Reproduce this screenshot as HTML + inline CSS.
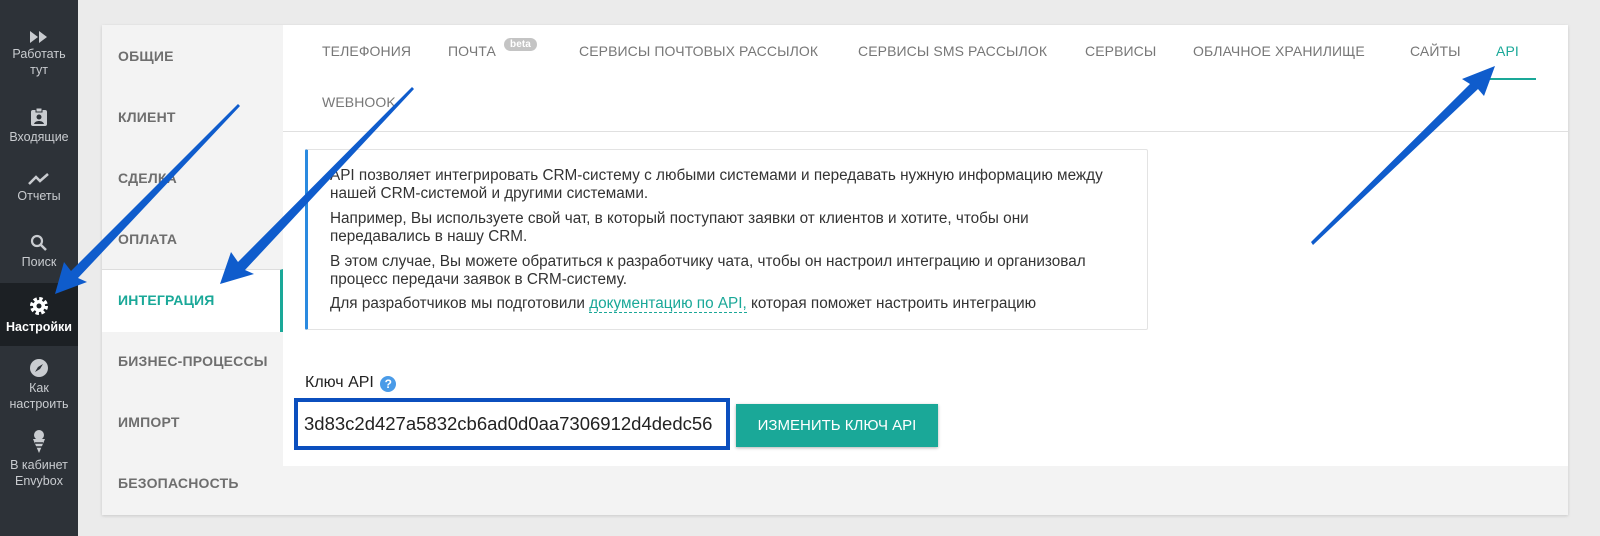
<!DOCTYPE html>
<html><head><meta charset="utf-8"><style>
*{margin:0;padding:0;box-sizing:border-box}
body{width:1600px;height:536px;overflow:hidden;background:#ebebeb;font-family:"Liberation Sans",sans-serif;position:relative}
.sb{position:absolute;left:0;top:0;width:78px;height:536px;background:#2d3238}
.si{position:absolute;left:0;width:78px;text-align:center;color:#c9ccd0;font-size:12.5px;line-height:16px}
.si svg{display:block;margin:0 auto 2px}
.act{background:#1c2024;color:#fff;font-weight:bold}
.card{position:absolute;left:102px;top:25px;width:1466px;height:490px;background:#f3f3f3;box-shadow:0 1px 3px rgba(0,0,0,.15)}
.lm{position:absolute;left:118px;font-size:14px;color:#6e6e6e;font-weight:bold;letter-spacing:.2px}
.content{position:absolute;left:283px;top:25px;width:1285px;height:441px;background:#fff}
.tab{position:absolute;font-size:14px;color:#777;top:43px;letter-spacing:.1px}
.info{position:absolute;left:305px;top:149px;width:843px;height:181px;border:1px solid #e3e3e3;border-left:3px solid #2a8ae0;border-radius:2px}
.info p{position:absolute;left:22px;font-size:15.3px;color:#333;line-height:17.5px;white-space:nowrap}
</style></head><body>
<div class="sb">
 <div class="si" style="top:30px"><svg width="20" height="14" viewBox="0 0 20 14"><path d="M1 1l8 6-8 6zM10 1l8 6-8 6z" fill="#c9ccd0"/></svg>Работать<br>тут</div>
 <div class="si" style="top:107px"><svg width="18" height="20" viewBox="0 0 18 20"><rect x="1" y="3" width="16" height="16" rx="2" fill="#c9ccd0"/><rect x="6" y="1" width="6" height="4" fill="#c9ccd0" stroke="#2d3238"/><circle cx="9" cy="10" r="2.5" fill="#2d3238"/><path d="M4 17c1-4 9-4 10 0z" fill="#2d3238"/></svg>Входящие</div>
 <div class="si" style="top:172px"><svg width="22" height="14" viewBox="0 0 22 14"><path d="M1 12l7-7 4 4 8-7" stroke="#c9ccd0" stroke-width="2.5" fill="none"/></svg>Отчеты</div>
 <div class="si" style="top:234px"><svg width="18" height="18" viewBox="0 0 18 18"><circle cx="7" cy="7" r="5" stroke="#c9ccd0" stroke-width="2.2" fill="none"/><path d="M11 11l5 5" stroke="#c9ccd0" stroke-width="2.5"/></svg>Поиск</div>
 <div class="si act" style="top:283px;height:63px;padding-top:12px"><svg width="22" height="22" viewBox="0 0 22 22"><circle cx="11" cy="11" r="7" fill="none" stroke="#fff" stroke-width="4" stroke-dasharray="3.2 2.3"/><circle cx="11" cy="11" r="6" fill="#fff"/><circle cx="11" cy="11" r="2.5" fill="#1c2024"/></svg>Настройки</div>
 <div class="si" style="top:358px"><svg width="20" height="20" viewBox="0 0 20 20"><circle cx="10" cy="10" r="9" fill="#c9ccd0"/><path d="M14 6l-5 3-3 5 5-3z" fill="#2d3238"/></svg>Как<br>настроить</div>
 <div class="si" style="top:429px"><svg width="16" height="26" viewBox="0 0 16 26"><circle cx="8" cy="6" r="5" fill="#c9ccd0"/><path d="M2 10h12l-6 14z" fill="#c9ccd0"/><path d="M4 14h8M5 18h6" stroke="#2d3238" stroke-width="1.5"/></svg>В кабинет<br>Envybox</div>
</div>
<div class="card"></div>
<div class="lm" style="top:48px">ОБЩИЕ</div>
<div class="lm" style="top:109px">КЛИЕНТ</div>
<div class="lm" style="top:170px">СДЕЛКА</div>
<div class="lm" style="top:231px">ОПЛАТА</div>
<div style="position:absolute;left:102px;top:269px;width:181px;height:63px;background:#fff;border-top:1px solid #ddd;border-right:3px solid #1aa898"></div>
<div class="lm" style="top:292px;color:#1aa898">ИНТЕГРАЦИЯ</div>
<div class="lm" style="top:353px">БИЗНЕС-ПРОЦЕССЫ</div>
<div class="lm" style="top:414px">ИМПОРТ</div>
<div class="lm" style="top:475px">БЕЗОПАСНОСТЬ</div>
<div class="content"></div>
<div class="tab" style="left:322px">ТЕЛЕФОНИЯ</div>
<div class="tab" style="left:448px">ПОЧТА <span style="position:absolute;left:56px;top:-5px;background:#c4c4c4;color:#fff;font-size:10px;font-weight:bold;border-radius:8px;padding:1px 6px">beta</span></div>
<div class="tab" style="left:579px">СЕРВИСЫ ПОЧТОВЫХ РАССЫЛОК</div>
<div class="tab" style="left:858px">СЕРВИСЫ SMS РАССЫЛОК</div>
<div class="tab" style="left:1085px">СЕРВИСЫ</div>
<div class="tab" style="left:1193px">ОБЛАЧНОЕ ХРАНИЛИЩЕ</div>
<div class="tab" style="left:1410px">САЙТЫ</div>
<div class="tab" style="left:1496px;color:#1aa898">API</div>
<div style="position:absolute;left:1482px;top:78px;width:54px;height:2px;background:#1aa898"></div>
<div class="tab" style="left:322px;top:94px">WEBHOOK</div>
<div style="position:absolute;left:283px;top:131px;width:1285px;height:1px;background:#e0e0e0"></div>
<div class="info">
<p style="top:17px">API позволяет интегрировать CRM-систему с любыми системами и передавать нужную информацию между<br>нашей CRM-системой и другими системами.</p>
<p style="top:60px">Например, Вы используете свой чат, в который поступают заявки от клиентов и хотите, чтобы они<br>передавались в нашу CRM.</p>
<p style="top:103px">В этом случае, Вы можете обратиться к разработчику чата, чтобы он настроил интеграцию и организовал<br>процесс передачи заявок в CRM-систему.</p>
<p style="top:145px">Для разработчиков мы подготовили <span style="color:#1aa898;border-bottom:1px dashed #1aa898">документацию по API,</span> которая поможет настроить интеграцию</p>
</div>
<div style="position:absolute;left:305px;top:374px;font-size:16px;color:#222">Ключ API <span style="display:inline-block;width:16px;height:16px;border-radius:50%;background:#4a9be8;color:#fff;font-size:12px;font-weight:bold;text-align:center;line-height:16px;vertical-align:-1px;margin-left:2px">?</span></div>
<div style="position:absolute;left:294px;top:398px;width:436px;height:52px;border:4px solid #0b4fbe;background:#fff;font-size:18.5px;color:#222;padding:11px 0 0 6px;white-space:nowrap;overflow:hidden">3d83c2d427a5832cb6ad0d0aa7306912d4dedc56</div>
<div style="position:absolute;left:736px;top:404px;width:202px;height:43px;background:#1aa898;color:#fff;font-size:15px;text-align:center;line-height:43px;box-shadow:0 1px 3px rgba(0,0,0,.3)">ИЗМЕНИТЬ КЛЮЧ API</div>
<svg width="1600" height="536" style="position:absolute;left:0;top:0">
<g fill="#0f5ccc">
<polygon points="238,104 240,106 78,278 87,282 55,294 64,262 71,271"/>
<polygon points="412,87 414,89 245,270 254,274 220,284 231,252 238,262"/>
<polygon points="1313,245 1311,242 1470,84 1462,79 1495,66 1484,96 1478,89"/>
</g>
</svg>
</body></html>
